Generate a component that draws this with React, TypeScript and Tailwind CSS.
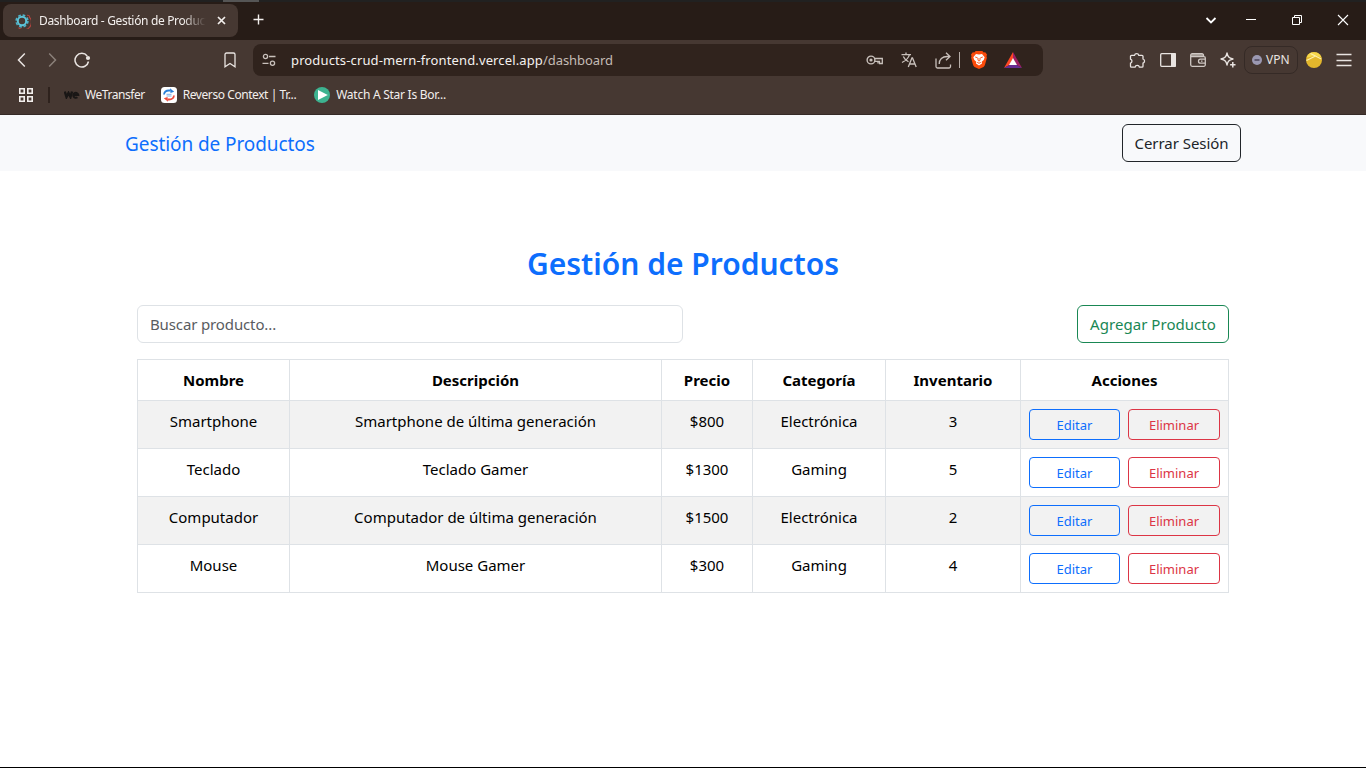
import React from "react";

const products = [
  { name: "Smartphone", description: "Smartphone de última generación", price: 800, category: "Electrónica", stock: 3 },
  { name: "Teclado", description: "Teclado Gamer", price: 1300, category: "Gaming", stock: 5 },
  { name: "Computador", description: "Computador de última generación", price: 1500, category: "Electrónica", stock: 2 },
  { name: "Mouse", description: "Mouse Gamer", price: 300, category: "Gaming", stock: 4 },
];

const headings = ["Nombre", "Descripción", "Precio", "Categoría", "Inventario", "Acciones"];

type IconProps = { w: number; h: number; className?: string; children: React.ReactNode };

function Icon({ w, h, className = "", children }: IconProps) {
  return (
    <svg width={w} height={h} viewBox={`0 0 ${w} ${h}`} fill="none" stroke="currentColor" strokeWidth="1.5" className={`shrink-0 ${className}`}>
      {children}
    </svg>
  );
}

function TabStrip() {
  return (
    <div className="flex h-10 flex-col bg-[#271c17]">
      <div className="flex h-0.5 shrink-0 bg-[#212121]">
        <div className="ml-[223px] w-9 bg-[#555]" />
      </div>
      <div className="flex flex-1 text-[#f3efed]">
        <div className="mt-0.5 ml-[3px] flex h-[33px] w-[235px] items-center rounded-lg bg-[#463832] pl-3">
          <Icon w={16} h={16}>
            <circle cx="7" cy="8" r="5.9" stroke="#4fb3c9" strokeWidth="1.6" strokeDasharray="2.7 1.93" />
            <circle cx="7" cy="8" r="4.2" stroke="#5cc3d8" strokeWidth="2" />
            <path d="M14.2 3.8A7.6 7.6 0 0 1 3.5 14.6" stroke="#b5443f" strokeWidth="1.1" />
            <path d="M12 2.2l2.6.7-.5 2.3" stroke="#b5443f" strokeWidth="1" />
          </Icon>
          <span className="ml-2 w-[167px] overflow-hidden whitespace-nowrap text-xs tracking-[-0.34px] [mask-image:linear-gradient(to_right,black_86%,transparent)]">
            Dashboard - Gestión de Productos
          </span>
          <Icon w={9} h={9} className="ml-[11px]">
            <path d="M1 1l7 7M8 1l-7 7" strokeWidth="1.7" />
          </Icon>
        </div>
        <Icon w={11} h={11} className="mt-[12px] ml-[15px]">
          <path d="M5.5 .5v10M.5 5.5h10" strokeWidth="1.4" />
        </Icon>
        <div className="mr-[17px] ml-auto flex pt-[12px] text-white">
          <Icon w={12} h={12} className="mr-[28px]">
            <path d="M1.5 4l4.5 4.500l4.500-4.500" strokeWidth="1.8" />
          </Icon>
          <Icon w={12} h={12} className="mr-[34px]">
            <path d="M1 5.500h10" strokeWidth="1" />
          </Icon>
          <Icon w={12} h={12} className="mr-[34px]">
            <path d="M1.500 3.500h7v7h-7zM3.500 3.500v-2h7v7h-2" strokeWidth="1" />
          </Icon>
          <Icon w={12} h={12}>
            <path d="M1 1l10 10M11 1L1 11" strokeWidth="1.1" />
          </Icon>
        </div>
      </div>
    </div>
  );
}

function AddressBar() {
  return (
    <div className="flex h-8 w-[790px] items-center rounded-lg bg-[#30231d] text-[#c9c1bc]">
      <Icon w={14} h={14} className="ml-[9px]">
        <circle cx="3.500" cy="3.500" r="2.100" strokeWidth="1.300" />
        <path d="M7 3.500h6.500M.5 10.300h6" strokeWidth="1.300" />
        <circle cx="10.500" cy="10.300" r="2.100" strokeWidth="1.300" />
      </Icon>
      <div className="mt-0.5 ml-[15px] flex whitespace-nowrap text-[13px]">
        <span className="tracking-[0.13px] text-[#f4f1ef]">products-crud-mern-frontend.vercel.app</span>
        <span className="tracking-[-0.06px] text-[#c4bbb5]">/dashboard</span>
      </div>
      <div className="mr-[21px] ml-auto flex items-center">
        <Icon w={18} h={12} className="mr-[17px]">
          <circle cx="5" cy="6" r="3.900" strokeWidth="1.400" />
          <circle cx="5" cy="6" r="1.600" fill="currentColor" stroke="none" />
          <path d="M8.500 4.500h7.800v5h-2.800v-2.200h-1.500v2.200M8.700 7.300h3.500" strokeWidth="1.300" />
        </Icon>
        <Icon w={16} h={16} className="mr-[18px]">
          <path d="M.5 2.600h9.500M5 .5v2M8.500 2.600C7.500 6 5 8.500 1 10.500M2.300 4.500c1 2.500 3 4 5.200 5.300M7.300 15l3.600-9h.6l3.700 9M8.600 12h5.300" strokeWidth="1.300" />
        </Icon>
        <Icon w={17} h={17} className="mr-[7px]">
          <path d="M1 6.500v8a1.500 1.500 0 0 0 1.500 1.500h11.500a1.500 1.500 0 0 0 1.500-1.500v-2M4.200 12c0-4.500 3-7.500 8-7.500h2.500M11 .8l4 3.700l-4 3.700" strokeWidth="1.300" />
        </Icon>
        <div className="mr-[11px] h-4 w-px bg-[#b5aca7]" />
        <Icon w={16} h={18} className="mr-[17px]">
          <path d="M4.700 0h6.600l1.400 1.500 1.500-.2L16 3.500l-.5 1.700.4 1.500-2 7.300c-.2.800-.8 1.400-1.400 1.900L8 18l-4.500-2.100c-.6-.5-1.200-1.100-1.400-1.900L.1 6.700l.4-1.500L0 3.500l1.800-2.200 1.500.2z" fill="#fb4b0b" stroke="none" />
          <path d="M8 3.400l3-.5 2.700 3.300-1 2.900-2 1.600.3 1.700L8 14.600l-3-2.200.3-1.700-2-1.600-1-2.900L5 2.900z" fill="#fff" stroke="none" />
          <path d="M4.200 6l2.400.8M11.800 6l-2.400.8M7 7v2.300l1 .9 1-.9V7M6.200 11.300L8 12.300l1.800-1" stroke="#fb4b0b" strokeWidth=".9" />
        </Icon>
        <Icon w={18} h={16}>
          <path d="M9 0L0 16l5.300-3L9 6.400z" fill="#ff4724" stroke="none" />
          <path d="M9 0l9 16-5.300-3L9 6.400z" fill="#9e1f63" stroke="none" />
          <path d="M0 16h18l-5.300-3H5.300z" fill="#662d91" stroke="none" />
          <path d="M9 6l4 7H5z" fill="#fff" stroke="none" />
        </Icon>
      </div>
    </div>
  );
}

function Toolbar() {
  return (
    <div className="flex h-10 items-center pr-[14px] pl-[17px] text-[#e9e4e1]">
      <Icon w={9} h={16}>
        <path d="M7.800 1.500L1.500 8l6.300 6.500" />
      </Icon>
      <Icon w={9} h={16} className="ml-[22px] text-[#8b807a]">
        <path d="M1.200 1.500L7.500 8l-6.300 6.500" />
      </Icon>
      <Icon w={18} h={16} className="ml-[17px]">
        <path d="M13.200 4A6.800 6.800 0 1 0 14.500 9.500" />
        <circle cx="14" cy="6" r="2.100" fill="currentColor" stroke="none" />
      </Icon>
      <Icon w={12} h={16} className="mr-[17px] ml-[132px]">
        <path d="M1 2.500A1.500 1.500 0 0 1 2.500 1h7A1.500 1.500 0 0 1 11 2.500v12.300L6 11.500l-5 3.300z" strokeWidth="1.300" />
      </Icon>
      <AddressBar />
      <div className="ml-auto flex items-center">
        <Icon w={17} h={17} className="mr-[14px]">
          <path d="M2.500 3.300h3a2.200 2.200 0 0 1 4.300 0h3.200a1 1 0 0 1 1 1v2.700a2.200 2.200 0 0 1 0 4.200v3a1 1 0 0 1-1 1h-2.600a2.200 2.200 0 0 0-4.300 0H2.500a1 1 0 0 1-1-1v-3.100a2.100 2.100 0 0 0 0-4V4.300a1 1 0 0 1 1-1z" strokeWidth="1.300" />
        </Icon>
        <Icon w={16} h={14} className="mr-[14px]">
          <rect x=".7" y=".7" width="14.600" height="12.600" rx="1" strokeWidth="1.300" />
          <path d="M11 0h4a1 1 0 0 1 1 1v12a1 1 0 0 1-1 1h-4z" fill="currentColor" stroke="none" />
        </Icon>
        <Icon w={16} h={14} className="mr-[14px] text-[#cfc8c4]">
          <path d="M.7 2.200A1.500 1.500 0 0 1 2.200 .7h10a1.500 1.500 0 0 1 1.500 1.500v1.300h-13z" fill="#a59c96" stroke="none" />
          <path d="M13.500 3.500V2.200A1.500 1.500 0 0 0 12 .7H2.200A1.500 1.500 0 0 0 .7 2.200v9.600a1.500 1.500 0 0 0 1.500 1.500h11.600a1.500 1.500 0 0 0 1.500-1.500V5a1.300 1.300 0 0 0-1.300-1.300H1" strokeWidth="1.300" />
          <path d="M15 6.200h-4.500a2 2 0 0 0 0 4H15M11 8.200h1.500" strokeWidth="1.300" />
        </Icon>
        <Icon w={16} h={16} className="mr-2">
          <path d="M7 1c.8 3.800 1.800 5 6 6-4.200 1-5.200 2.200-6 6-.8-3.800-1.800-5-6-6 4.200-1 5.200-2.200 6-6z" strokeWidth="1.300" strokeLinejoin="round" />
          <path d="M12.800 10v5.400M10.100 12.700h5.400" strokeWidth="1.500" />
        </Icon>
        <div className="mr-2 flex h-7 w-[54px] items-center rounded-lg border border-[#352a26] pl-[7px]">
          <Icon w={10} h={10}>
            <circle cx="5" cy="5" r="5" fill="#9b98b1" stroke="none" />
            <path d="M2.500 5h5" stroke="#4b455a" />
          </Icon>
          <span className="ml-1 text-xs">VPN</span>
        </div>
        <Icon w={16} h={16} className="mr-[14px]">
          <circle cx="8" cy="8" r="8" fill="#e3b72c" stroke="none" />
          <path d="M.5 5.500A8 8 0 0 1 15.500 5.500L10 3.700z" fill="#f7d84a" stroke="none" />
          <path d="M.5 8.500L10 3.700M4.500 1.500L15.300 7" stroke="#fff1a8" strokeWidth="1.200" />
        </Icon>
        <Icon w={16} h={14}>
          <path d="M.5 1.500h15M.5 7.500h15M.5 12.500h15" strokeWidth="1.300" />
        </Icon>
      </div>
    </div>
  );
}

function BookmarksBar() {
  return (
    <div className="flex h-[35px] items-center border-b border-[#352a26] text-xs whitespace-nowrap text-[#f3efed]">
      <div className="flex items-center pb-1">
        <Icon w={14} h={14} className="ml-[19px]">
          <path d="M.8 .8h4.400v4.400H.8zM8.800 .8h4.400v4.400H8.800zM.8 8.800h4.400v4.400H.8zM8.800 8.800h4.400v4.400H8.800z" strokeWidth="1.600" />
        </Icon>
        <div className="ml-[15px] h-4 w-0.5 bg-[#2e221d]" />
        <Icon w={16} h={8} className="ml-[14px] text-[#191615]">
          <path d="M.8 .5L2.500 6l2-4 2 4L8 .5" strokeWidth="2.400" />
          <path d="M9.800 4h4.500a2.500 2.500 0 1 0-.9 2.300" strokeWidth="2" />
        </Icon>
        <span className="ml-[5px] tracking-[-0.45px]">WeTransfer</span>
        <Icon w={16} h={16} className="ml-4">
          <rect width="16" height="16" rx="3.500" fill="#fff" stroke="none" />
          <path d="M3 7.500C3.300 5 5 3.500 8 3.500h1.500" stroke="#2a7fd8" strokeWidth="1.800" />
          <path d="M9 1.300l4.200 3.500L9.500 6z" fill="#2a7fd8" stroke="none" />
          <path d="M13 8.500C12.700 11 11 12.500 8 12.500H6.500" stroke="#ee4a3c" strokeWidth="1.800" />
          <path d="M7 14.700L2.800 11.200 6.500 10z" fill="#ee4a3c" stroke="none" />
          <path d="M5.500 7.300h5M5.500 9h5" stroke="#7fb2ea" strokeWidth="1" />
        </Icon>
        <span className="ml-1.5 tracking-[-0.43px]">Reverso Context | Tr...</span>
        <Icon w={16} h={16} className="ml-[18px]">
          <circle cx="8" cy="8" r="8" fill="#3db390" stroke="none" />
          <path d="M4 3l9.800 5L4 13z" fill="#fff" stroke="none" />
        </Icon>
        <span className="ml-1.5 tracking-[-0.26px]">Watch A Star Is Bor...</span>
      </div>
    </div>
  );
}

function Navbar() {
  return (
    <nav className="flex h-14 items-center justify-between bg-[#f8f9fb] px-[125px]">
      <a className="pt-0.5 text-[19px] tracking-[-0.08px] text-[#0d6efd]">Gestión de Productos</a>
      <button className="h-[38px] w-[119px] rounded-md border border-[#212529] text-[15px] tracking-[-0.05px] text-[#212529]">Cerrar Sesión</button>
    </nav>
  );
}

function ProductTable() {
  return (
    <table className="mt-4 w-[1092px] table-fixed border-separate border-spacing-0 border-t border-l border-[#dee2e6] text-center text-[15px] leading-6 text-black">
      <colgroup>
        <col className="w-[152px]" />
        <col className="w-[372px]" />
        <col className="w-[91px]" />
        <col className="w-[133px]" />
        <col className="w-[135px]" />
        <col className="w-[208px]" />
      </colgroup>
      <thead>
        <tr className="h-[41px]">
          {headings.map((heading) => (
            <th key={heading} className="border-r border-b border-[#dee2e6] p-0 font-bold">{heading}</th>
          ))}
        </tr>
      </thead>
      <tbody>
        {products.map((p) => (
          <tr key={p.name} className="h-12 odd:bg-[#f2f2f2]">
            {[p.name, p.description, `$${p.price}`, p.category, p.stock].map((value, i) => (
              <td key={i} className="border-r border-b border-[#dee2e6] px-2 pt-2 pb-0 align-top">{value}</td>
            ))}
            <td className="border-r border-b border-[#dee2e6] p-0">
              <div className="flex justify-center gap-2 text-[13px]">
                <button className="h-[31px] w-[91px] rounded border border-[#0d6efd] text-[#0d6efd]">Editar</button>
                <button className="h-[31px] w-[92px] rounded border border-[#dc3545] text-[#dc3545]">Eliminar</button>
              </div>
            </td>
          </tr>
        ))}
      </tbody>
    </table>
  );
}

export default function App() {
  return (
    <div className="flex h-screen w-[1366px] flex-col overflow-hidden border-b border-black bg-white font-['Noto_Sans',sans-serif]">
      <header className="h-[115px] shrink-0 bg-[#463832]">
        <TabStrip />
        <Toolbar />
        <BookmarksBar />
      </header>
      <Navbar />
      <main className="mx-auto w-[1092px] pt-[74px]">
        <h1 className="text-center text-[30px] leading-[38px] font-semibold text-[#0d6efd]">Gestión de Productos</h1>
        <div className="mt-[22px] flex justify-between">
          <input
            placeholder="Buscar producto..."
            className="h-[38px] w-[546px] rounded-md border border-[#dee2e6] px-3 text-[15px] tracking-[-0.13px] placeholder:text-[#595c5f]"
          />
          <button className="h-[38px] w-[152px] rounded-md border border-[#198754] text-[15px] tracking-[0.05px] text-[#198754]">Agregar Producto</button>
        </div>
        <ProductTable />
      </main>
    </div>
  );
}
